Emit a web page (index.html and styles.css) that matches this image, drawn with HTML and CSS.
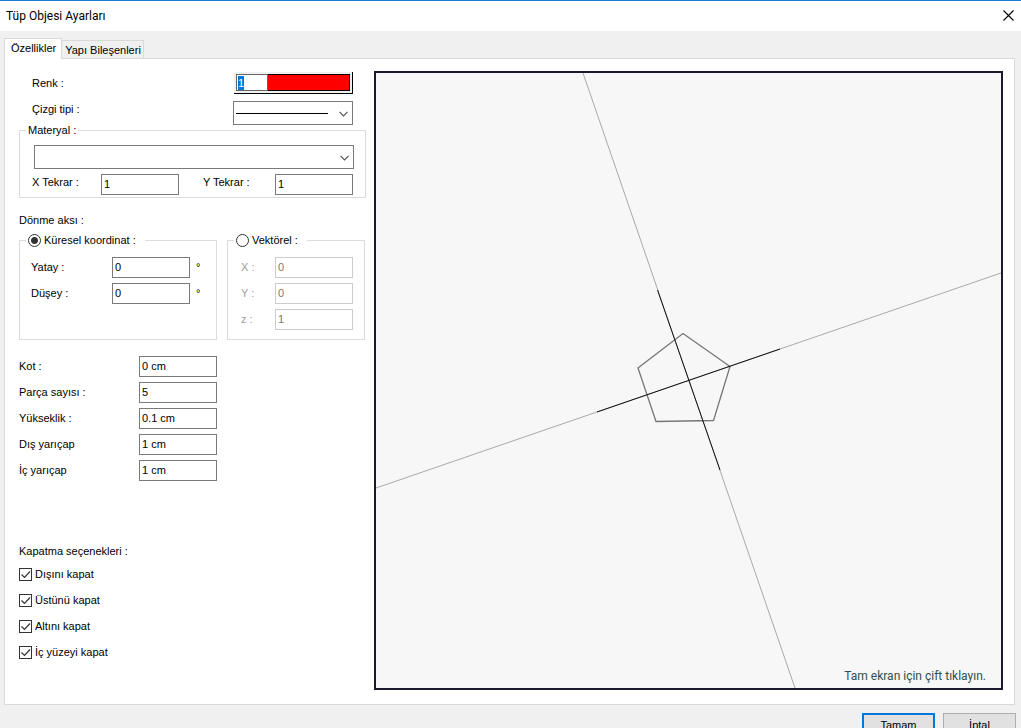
FILE: index.html
```html
<!DOCTYPE html>
<html lang="tr">
<head>
<meta charset="utf-8">
<title>Tüp Objesi Ayarları</title>
<link rel="stylesheet" href="styles.css">
</head>
<body>
<div class="dialog">
  <header class="titlebar">
    <h1 class="title">Tüp Objesi Ayarları</h1>
    <button class="close" type="button" aria-label="Kapat">
      <svg width="11" height="11" viewBox="0 0 11 11"><path d="M.5.5l10 10M10.5.5l-10 10" stroke="#000" stroke-width="1.1"/></svg>
    </button>
  </header>

  <div class="tabs" role="tablist">
    <button class="tab tab-active" type="button" role="tab" aria-selected="true">Özellikler</button>
    <button class="tab" type="button" role="tab" aria-selected="false">Yapı Bileşenleri</button>
  </div>

  <main class="panel">
    <form class="form">
      <div class="row row-color">
        <label for="color">Renk :</label>
        <div class="color">
          <input class="color-index" id="color" value="1">
          <span class="color-swatch"></span>
        </div>
      </div>
      <div class="row row-line">
        <label for="line">Çizgi tipi :</label>
        <div class="combo combo-line">
          <select id="line"><option></option></select>
          <span class="line-sample"></span>
          <svg class="chevron" width="9" height="6" viewBox="0 0 9 6"><path d="M.5.8l4 4 4-4" fill="none" stroke="#555" stroke-width="1.2"/></svg>
        </div>
      </div>

      <fieldset class="group">
        <legend class="legend">Materyal :</legend>
        <div class="combo">
          <select aria-label="Materyal"><option></option></select>
          <svg class="chevron" width="9" height="6" viewBox="0 0 9 6"><path d="M.5.8l4 4 4-4" fill="none" stroke="#555" stroke-width="1.2"/></svg>
        </div>
        <div class="repeat">
          <label for="xr">X Tekrar :</label><input class="field" id="xr" value="1">
          <label for="yr">Y Tekrar :</label><input class="field" id="yr" value="1">
        </div>
      </fieldset>

      <p class="heading">Dönme aksı :</p>
      <div class="axes">
        <fieldset class="group axis">
          <legend class="legend legend-radio"><input class="radio" type="radio" name="axis" id="sph" checked><label for="sph">Küresel koordinat :</label></legend>
          <div class="grid grid-sphere">
            <label for="h">Yatay :</label><input class="field" id="h" value="0"><span class="unit">°</span>
            <label for="v">Düşey :</label><input class="field" id="v" value="0"><span class="unit">°</span>
          </div>
        </fieldset>
        <fieldset class="group axis">
          <legend class="legend legend-radio"><input class="radio" type="radio" name="axis" id="vec"><label for="vec">Vektörel :</label></legend>
          <div class="grid grid-vector">
            <label for="vx">X :</label><input class="field" id="vx" value="0" disabled>
            <label for="vy">Y :</label><input class="field" id="vy" value="0" disabled>
            <label for="vz">z :</label><input class="field" id="vz" value="1" disabled>
          </div>
        </fieldset>
      </div>

      <div class="grid grid-size">
        <label for="kot">Kot :</label><input class="field" id="kot" value="0 cm">
        <label for="parca">Parça sayısı :</label><input class="field" id="parca" value="5">
        <label for="yuk">Yükseklik :</label><input class="field" id="yuk" value="0.1 cm">
        <label for="dis">Dış yarıçap</label><input class="field" id="dis" value="1 cm">
        <label for="ic">İç yarıçap</label><input class="field" id="ic" value="1 cm">
      </div>

      <p class="heading heading-close">Kapatma seçenekleri :</p>
      <div class="checks">
        <label class="check"><span class="box"><input type="checkbox" checked><svg viewBox="0 0 13 13"><path d="M2.5 6.5l3 3L11 3.5"/></svg></span>Dışını kapat</label>
        <label class="check"><span class="box"><input type="checkbox" checked><svg viewBox="0 0 13 13"><path d="M2.5 6.5l3 3L11 3.5"/></svg></span>Üstünü kapat</label>
        <label class="check"><span class="box"><input type="checkbox" checked><svg viewBox="0 0 13 13"><path d="M2.5 6.5l3 3L11 3.5"/></svg></span>Altını kapat</label>
        <label class="check"><span class="box"><input type="checkbox" checked><svg viewBox="0 0 13 13"><path d="M2.5 6.5l3 3L11 3.5"/></svg></span>İç yüzeyi kapat</label>
      </div>
    </form>

    <section class="preview" aria-label="Önizleme">
      <svg class="drawing" viewBox="0 0 625 615" preserveAspectRatio="xMidYMid slice" fill="none">
        <path d="M207 0L419 615M0 415L625 200" stroke="#a9a9a9"/>
        <path d="M307 260.500L354 293.500L337.500 347.500L280 348.500L262 295Z" stroke="#777" stroke-width="1.300"/>
        <path d="M281.500 217L344 397" stroke="#111"/>
        <path d="M221 339L404 276" stroke="#111"/>
      </svg>
      <p class="hint">Tam ekran için çift tıklayın.</p>
    </section>
  </main>

  <footer class="footer">
    <button class="btn btn-default" type="button">Tamam</button>
    <button class="btn" type="button">İptal</button>
  </footer>
</div>
<script src="main.js"></script>
</body>
</html>
```
FILE: styles.css
```css
* { box-sizing: border-box; }

body {
  margin: 0;
  height: 100vh;
  overflow: hidden;
  background: #f0f0f0;
  color: #000;
  font: 11px/14px "Liberation Sans", Arial, sans-serif;
}

button, input, select { font: inherit; color: inherit; border-radius: 0; }
p { margin: 0; }

.dialog {
  display: flex;
  flex-direction: column;
  min-height: 100vh;
  border-top: 1px solid #1a7fd4;
}

.titlebar {
  display: flex;
  align-items: center;
  justify-content: space-between;
  height: 30px;
  padding: 0 7px 0 6px;
  background: #fff;
}
.title { margin: 0; font: 12px/16px Roboto, sans-serif; }
.close { display: flex; padding: 0 0 2px; border: 0; background: none; }

.tabs { display: flex; align-items: flex-end; padding: 7px 0 0 4px; }
.tab {
  height: 18px;
  padding: 0 2px 0 3px;
  border: 1px solid #d9d9d9;
  border-width: 1px 1px 0 0;
  background: #f0f0f0;
  white-space: nowrap;
}
.tab-active {
  position: relative;
  height: 21px;
  margin-bottom: -1px;
  padding: 0 5px 2px 6px;
  border-left-width: 1px;
  background: #fff;
}

.panel {
  display: flex;
  flex: 1;
  gap: 8px;
  margin: 0 6px 0 4px;
  padding: 12px 11px 14px 14px;
  border: 1px solid #d9d9d9;
  background: #fff;
}
.form { flex: none; width: 347px; padding: 1px 0 29px; }

.row { display: flex; justify-content: space-between; padding: 0 13px; }
.row-color { align-items: center; }
.row-line { margin-top: 7px; }
.row-line label, .repeat label { padding-top: 1px; }

.color {
  display: flex;
  width: 119px;
  height: 22px;
  padding: 2px;
  border: solid #000;
  border-width: 0 1px 1px 0;
  background: #f0f0f0;
}
.color-index {
  width: 32px;
  padding: 0 1px;
  border: 1px solid #666;
  outline: 0;
  background: #fff;
}
.color-index::selection { background: #0078d7; color: #fff; }
.color-swatch { flex: 1; border: 1px solid #000; border-left: 0; background: #f00; }

.combo { position: relative; height: 24px; }
.combo select {
  display: block;
  width: 100%;
  height: 100%;
  border: 1px solid #7a7a7a;
  background: #fff;
  appearance: none;
}
.combo-line { width: 120px; }
.chevron { position: absolute; top: 10px; right: 5px; pointer-events: none; }
.line-sample {
  position: absolute;
  top: 12px;
  left: 3px;
  right: 25px;
  height: 1px;
  background: #000;
  pointer-events: none;
}

.group { min-width: 0; margin: 0; padding: 10px 11px 2px 14px; border: 1px solid #dcdcdc; }
.legend { margin-left: -8px; padding: 0 2px; line-height: 10px; }
.legend-radio { display: flex; align-items: center; gap: 3px; padding: 0 9px 0 2px; line-height: 13px; }

.repeat {
  display: grid;
  grid-template-columns: 69px 102px 72px 78px;
  margin: 5px 0 0 -2px;
}
.field {
  width: 78px;
  height: 21px;
  padding: 0 2px 1px;
  border: 1px solid #7a7a7a;
  background: #fff;
}
.field:disabled { border-color: #ccc; color: #777; }

.heading { margin-top: 15px; }
.axes { display: grid; grid-template-columns: 198px 138px; gap: 10px; margin-top: 7px; }
.axis { padding: 10px 11px 9px; }
.axis .legend { margin-left: -5px; }

.radio {
  width: 13px;
  height: 13px;
  margin: 0;
  border: 1px solid #333;
  border-radius: 50%;
  background: #fff;
  appearance: none;
}
.radio:checked { background: radial-gradient(circle, #333 3px, #fff 4px); }

.grid { display: grid; gap: 5px 0; align-items: center; }
.grid label, .unit { padding-bottom: 2px; }
.grid-sphere { grid-template-columns: 81px 84px 1fr; }
.grid-vector { grid-template-columns: 34px 78px; color: #a0a0a0; padding-left: 2px; }
.grid-size { grid-template-columns: 120px 78px; margin-top: 16px; }

.heading-close { margin-top: 63px; }
.checks { display: flex; flex-direction: column; gap: 12px; margin-top: 9px; }
.check { display: flex; align-items: center; gap: 3px; }
.box { position: relative; display: flex; width: 13px; height: 13px; }
.box input { width: 13px; height: 13px; margin: 0; border: 1px solid #333; background: #fff; appearance: none; }
.box svg { position: absolute; inset: 0; fill: none; stroke: #333; stroke-width: 1.2; pointer-events: none; }
.box input:not(:checked) + svg { display: none; }

.preview {
  position: relative;
  display: flex;
  flex: 1;
  min-width: 0;
  border: 2px solid #1a1a2e;
  background: #f7f7f7;
}
.drawing { flex: 1; width: 100%; min-width: 0; }
.hint {
  position: absolute;
  right: 15px;
  bottom: 4px;
  color: #2f4f4f;
  font: 12px/16px Roboto, sans-serif;
}

.footer { display: flex; justify-content: flex-end; gap: 8px; padding: 8px 5px 8px 0; }
.btn { width: 73px; height: 23px; padding: 0; border: 1px solid #adadad; background: #e1e1e1; }
.btn-default { border: 2px solid #0078d7; }
```
FILE: main.js
```js
const colorIndex = document.getElementById("color");
colorIndex.focus();
colorIndex.select();
```
